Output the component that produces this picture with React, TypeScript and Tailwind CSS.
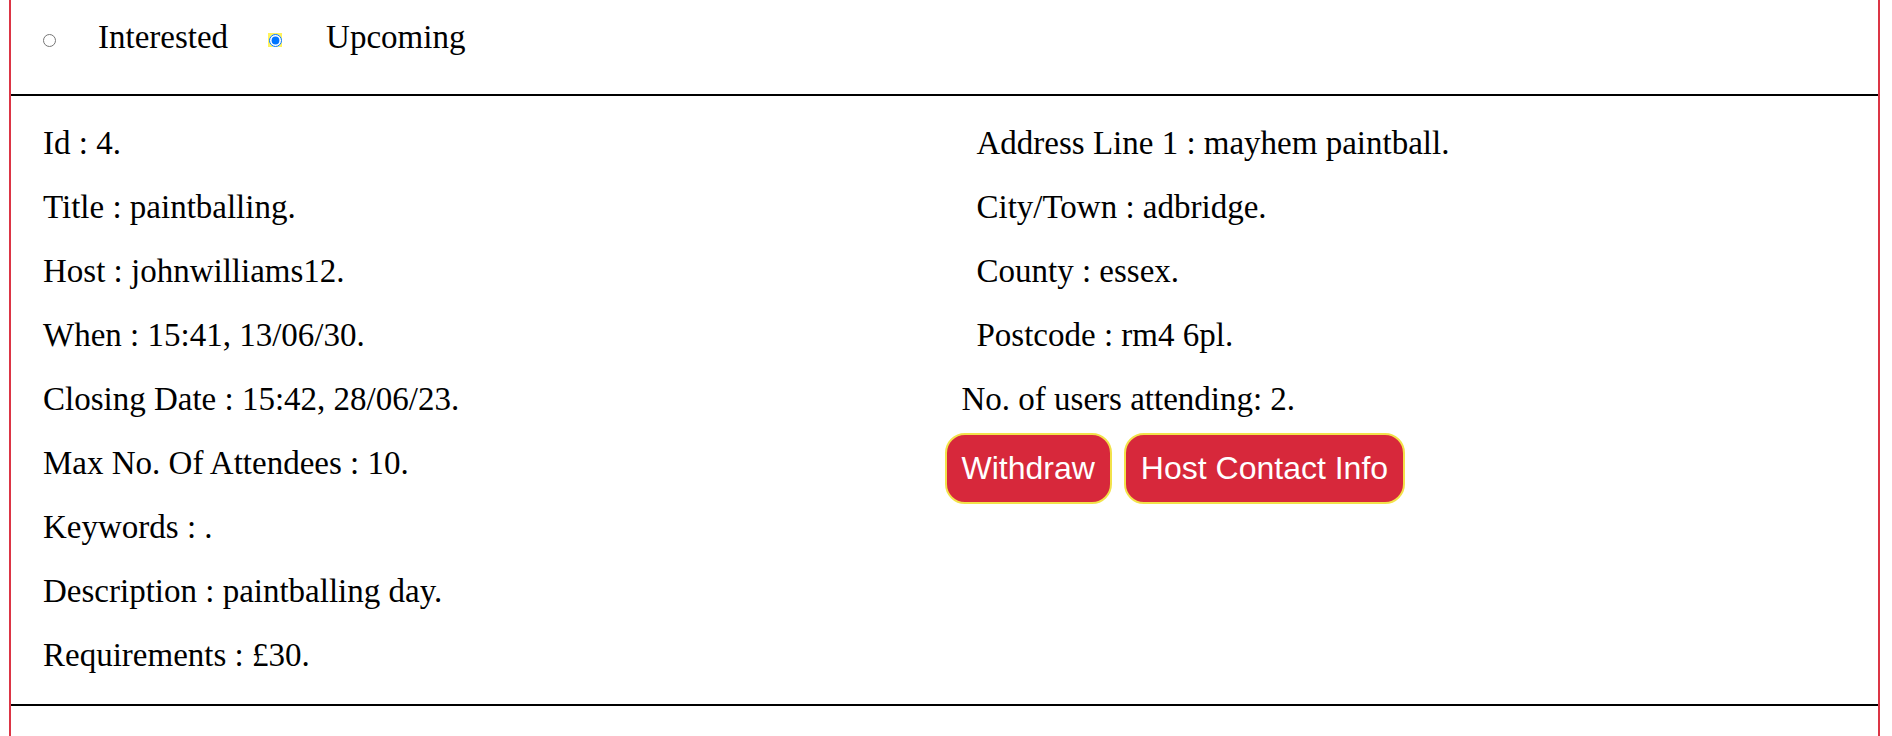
import React from "react";

const left = [
  "Id : 4.",
  "Title : paintballing.",
  "Host : johnwilliams12.",
  "When : 15:41, 13/06/30.",
  "Closing Date : 15:42, 28/06/23.",
  "Max No. Of Attendees : 10.",
  "Keywords : .",
  "Description : paintballing day.",
  "Requirements : £30.",
];

const right = [
  "Address Line 1 : mayhem paintball.",
  "City/Town : adbridge.",
  "County : essex.",
  "Postcode : rm4 6pl.",
];

export default function App() {
  return (
    <div className="min-h-screen bg-white">
      <div className="ml-[9px] w-[1871px] min-h-[736px] border-x-2 border-[#dc3545] font-['Liberation_Serif',serif] text-[33px] text-black">
        <div className="h-[94px] pl-[32px] pt-[20px]">
          <div className="flex h-[40px] items-center">
            <input type="radio" name="f" readOnly className="h-[13px] w-[13px]" />
            <span className="ml-[42px] mb-[6px] leading-[40px]">Interested</span>
            <span className="ml-[40px] flex h-[14px] w-[14px] items-center justify-center bg-[#fff35c]">
              <input type="radio" name="f" checked readOnly className="h-[13px] w-[13px]" />
            </span>
            <span className="ml-[44px] mb-[6px] leading-[40px]">Upcoming</span>
          </div>
        </div>
        <div className="grid grid-cols-2 border-t-2 border-black pt-[16px] pb-[16px]">
          <div className="pl-[32px]">
            {left.map((t) => (
              <div key={t} className="flex h-[64px] items-center whitespace-nowrap">
                {t}
              </div>
            ))}
          </div>
          <div>
            {right.map((t) => (
              <div key={t} className="flex h-[64px] items-center whitespace-nowrap pl-[32px]">
                {t}
              </div>
            ))}
            <div className="flex h-[64px] items-center whitespace-nowrap pl-[17px]">
              No. of users attending: 2.
            </div>
            <div className="mt-[1px] flex gap-[12px] font-['Liberation_Sans',Arial,sans-serif]">
              <button className="rounded-[20px] border-2 border-[#f2e24a] bg-[#d7283b] px-[15px] py-[15px] text-[32px] leading-[37px] text-white">
                Withdraw
              </button>
              <button className="rounded-[20px] border-2 border-[#f2e24a] bg-[#d7283b] px-[15px] py-[15px] text-[32px] leading-[37px] text-white">
                Host Contact Info
              </button>
            </div>
          </div>
        </div>
        <div className="border-t-2 border-black"></div>
      </div>
    </div>
  );
}
